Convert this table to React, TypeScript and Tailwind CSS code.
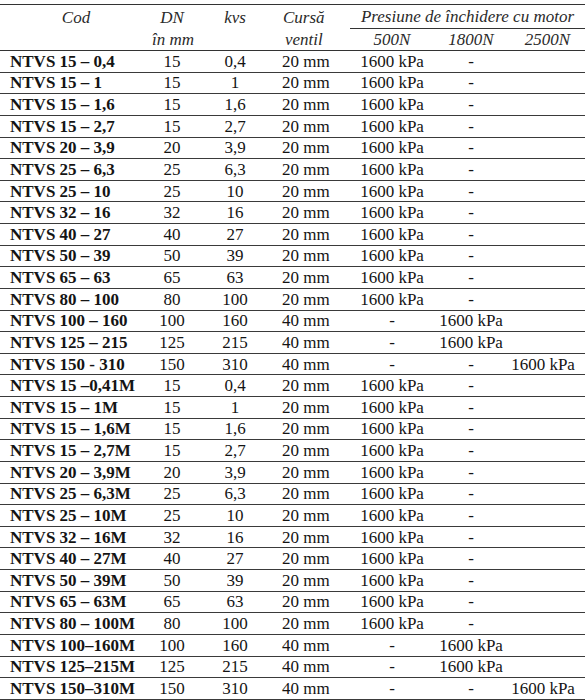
import React from "react";

type Row = [string, string, string, string, string, string, string];

const rows: Row[] = [
  ["NTVS 15 – 0,4", "15", "0,4", "20 mm", "1600 kPa", "-", ""],
  ["NTVS 15 – 1", "15", "1", "20 mm", "1600 kPa", "-", ""],
  ["NTVS 15 – 1,6", "15", "1,6", "20 mm", "1600 kPa", "-", ""],
  ["NTVS 15 – 2,7", "15", "2,7", "20 mm", "1600 kPa", "-", ""],
  ["NTVS 20 – 3,9", "20", "3,9", "20 mm", "1600 kPa", "-", ""],
  ["NTVS 25 – 6,3", "25", "6,3", "20 mm", "1600 kPa", "-", ""],
  ["NTVS 25 – 10", "25", "10", "20 mm", "1600 kPa", "-", ""],
  ["NTVS 32 – 16", "32", "16", "20 mm", "1600 kPa", "-", ""],
  ["NTVS 40 – 27", "40", "27", "20 mm", "1600 kPa", "-", ""],
  ["NTVS 50 – 39", "50", "39", "20 mm", "1600 kPa", "-", ""],
  ["NTVS 65 – 63", "65", "63", "20 mm", "1600 kPa", "-", ""],
  ["NTVS 80 – 100", "80", "100", "20 mm", "1600 kPa", "-", ""],
  ["NTVS 100 – 160", "100", "160", "40 mm", "-", "1600 kPa", ""],
  ["NTVS 125 – 215", "125", "215", "40 mm", "-", "1600 kPa", ""],
  ["NTVS 150 - 310", "150", "310", "40 mm", "-", "-", "1600 kPa"],
  ["NTVS 15 –0,41M", "15", "0,4", "20 mm", "1600 kPa", "-", ""],
  ["NTVS 15 – 1M", "15", "1", "20 mm", "1600 kPa", "-", ""],
  ["NTVS 15 – 1,6M", "15", "1,6", "20 mm", "1600 kPa", "-", ""],
  ["NTVS 15 – 2,7M", "15", "2,7", "20 mm", "1600 kPa", "-", ""],
  ["NTVS 20 – 3,9M", "20", "3,9", "20 mm", "1600 kPa", "-", ""],
  ["NTVS 25 – 6,3M", "25", "6,3", "20 mm", "1600 kPa", "-", ""],
  ["NTVS 25 – 10M", "25", "10", "20 mm", "1600 kPa", "-", ""],
  ["NTVS 32 – 16M", "32", "16", "20 mm", "1600 kPa", "-", ""],
  ["NTVS 40 – 27M", "40", "27", "20 mm", "1600 kPa", "-", ""],
  ["NTVS 50 – 39M", "50", "39", "20 mm", "1600 kPa", "-", ""],
  ["NTVS 65 – 63M", "65", "63", "20 mm", "1600 kPa", "-", ""],
  ["NTVS 80 – 100M", "80", "100", "20 mm", "1600 kPa", "-", ""],
  ["NTVS 100–160M", "100", "160", "40 mm", "-", "1600 kPa", ""],
  ["NTVS 125–215M", "125", "215", "40 mm", "-", "1600 kPa", ""],
  ["NTVS 150–310M", "150", "310", "40 mm", "-", "-", "1600 kPa"],
];

const cols = "grid grid-cols-[152px_40px_86px_72px_84px_74px_77px]";

export default function App() {
  return (
    <div
      className="w-[585px] h-[700px] bg-white text-[#141414] pt-[4px] overflow-hidden"
      style={{ fontFamily: '"Liberation Serif", "Times New Roman", serif' }}
    >
      <div className="border-t border-[#333]">
        {/* Header row 1 */}
        <div className={`${cols} h-[24px] items-center italic text-[17px] leading-none text-[#2a2a2a]`}>
          <div className="text-center">Cod</div>
          <div className="text-center">DN</div>
          <div className="text-center">kvs</div>
          <div className="pl-[5px]">Cursă</div>
          <div className="col-span-3 h-full flex items-center justify-center border-b border-[#333]">
            Presiune de închidere cu motor
          </div>
        </div>
        {/* Header row 2 */}
        <div className={`${cols} h-[22px] items-center italic text-[17px] leading-none text-[#2a2a2a] border-b border-[#333]`}>
          <div></div>
          <div className="text-center whitespace-nowrap">în mm</div>
          <div></div>
          <div className="pl-[7px]">ventil</div>
          <div className="text-center">500N</div>
          <div className="text-center">1800N</div>
          <div className="text-center pl-[2px]">2500N</div>
        </div>
        {/* Data rows */}
        {rows.map((r, i) => (
          <div
            key={i}
            className={`${cols} h-[21.63px] items-center text-[17px] leading-none border-b border-[#3a3a3a] whitespace-nowrap`}
          >
            <div className="pl-[10px] font-bold">{r[0]}</div>
            <div className="text-center">{r[1]}</div>
            <div className="text-center">{r[2]}</div>
            <div className="pl-[4px]">{r[3]}</div>
            <div className="text-center">{r[4]}</div>
            <div className="text-center">{r[5]}</div>
            <div className="text-center pr-[7px]">{r[6]}</div>
          </div>
        ))}
      </div>
    </div>
  );
}
